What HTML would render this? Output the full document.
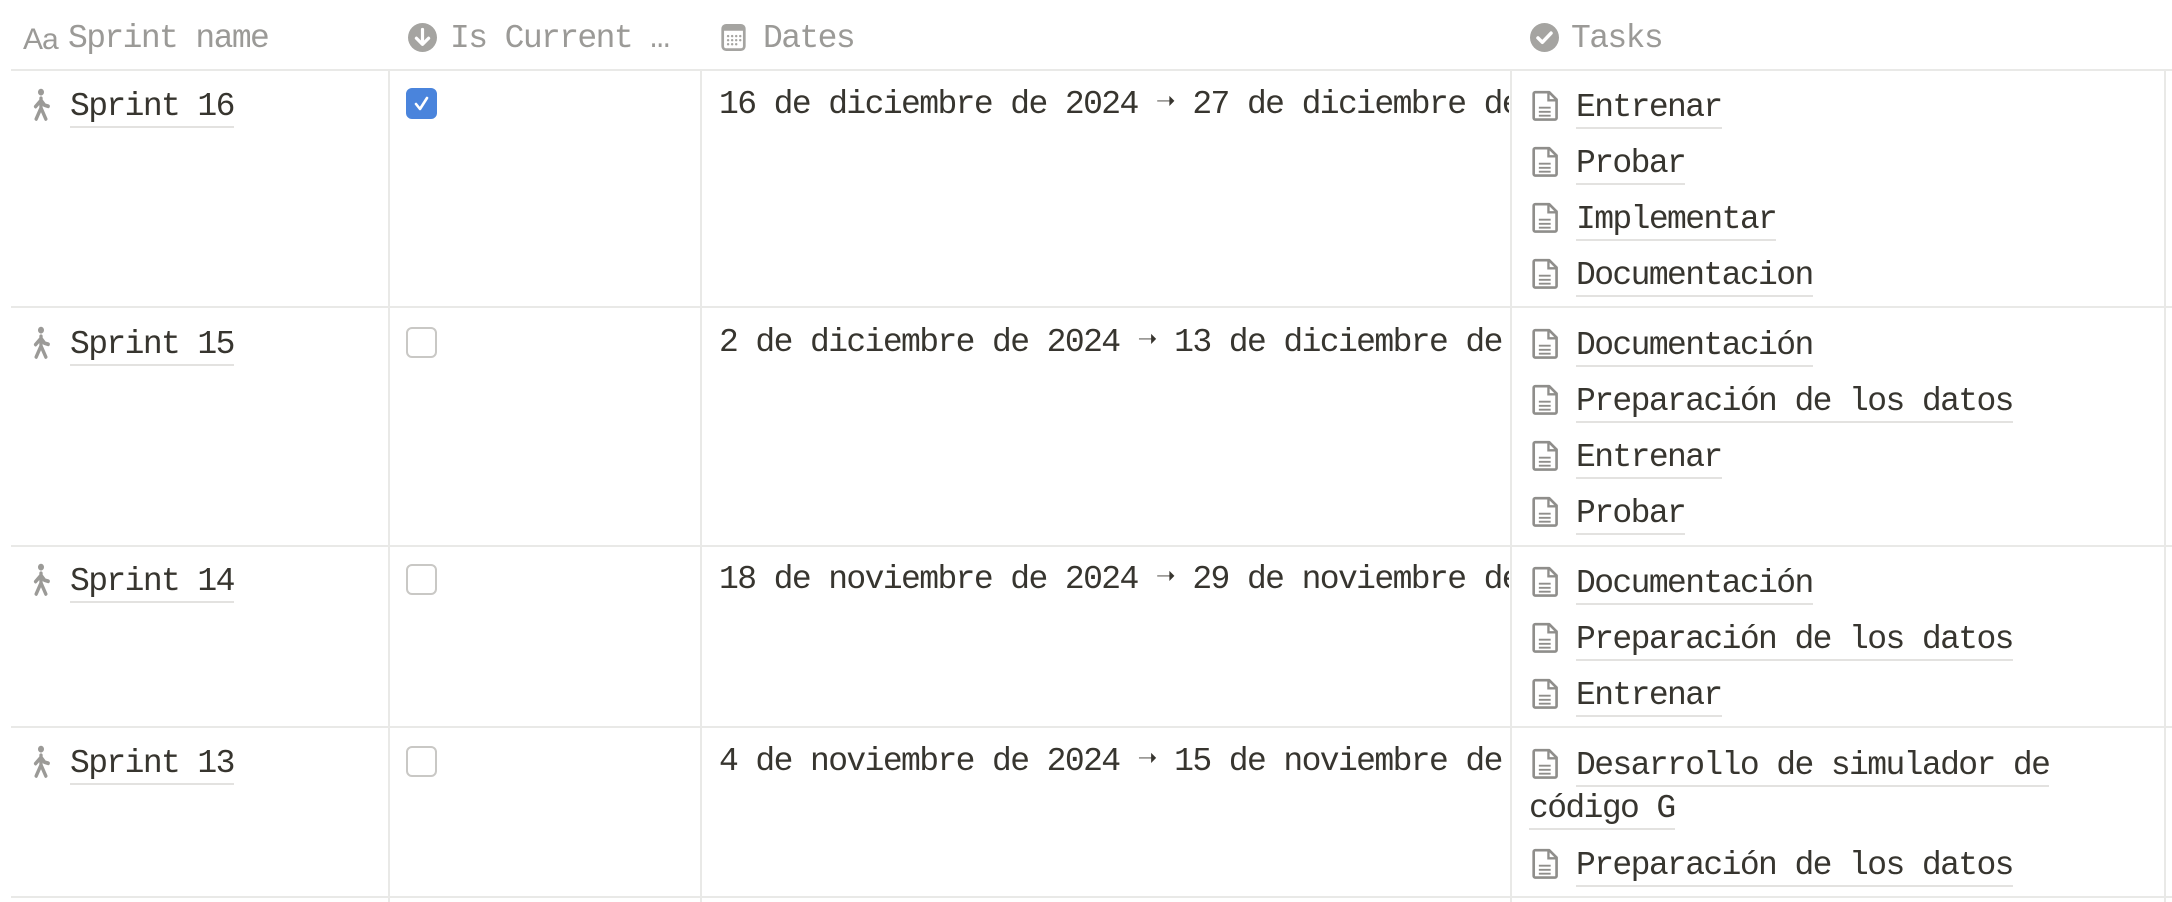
<!DOCTYPE html>
<html><head><meta charset="utf-8"><style>
body{margin:0;width:2172px;height:902px;background:#fff;position:relative;overflow:hidden;font-family:"Liberation Mono",monospace;color:#37352f}
.t{position:absolute;font-size:33px;line-height:40px;white-space:nowrap;letter-spacing:-1.6px;margin-top:3px}
.h{color:#9b9a97}
.u{border-bottom:2px solid #e3e2e0;padding-bottom:1px}
.hl{position:absolute;height:2px;background:#e9e9e7;left:11px;width:2161px}
.vl{position:absolute;width:2px;background:#e9e9e7;top:69px;height:833px}
.ic{position:absolute}
.cb{position:absolute;left:406px;width:31px;height:31px;border:2px solid #c9c8c5;border-radius:6px;box-sizing:border-box}
.dates{position:absolute;left:719px;width:790px;overflow:hidden}
</style></head><body>
<div class="hl" style="top:69px"></div>
<div class="hl" style="top:306px"></div>
<div class="hl" style="top:545px"></div>
<div class="hl" style="top:726px"></div>
<div class="hl" style="top:896px"></div>
<div class="vl" style="left:388px"></div>
<div class="vl" style="left:700px"></div>
<div class="vl" style="left:1510px"></div>
<div class="vl" style="left:2164px"></div>

<div class="t h" style="left:23px;top:17px;font-family:'Liberation Sans',sans-serif;font-size:30px;letter-spacing:-1px">Aa</div>
<div class="t h" style="left:68px;top:16px">Sprint name</div>
<svg class="ic" style="left:408px;top:23px" width="29" height="29" viewBox="0 0 20 20"><circle cx="10" cy="10" r="10" fill="#a5a4a1"/><path d="M10 4.5v10M5.8 10.5L10 14.7l4.2-4.2" stroke="#fff" stroke-width="2.2" fill="none" stroke-linecap="round" stroke-linejoin="round"/></svg>
<div class="t h" style="left:450px;top:16px">Is Current …</div>
<svg class="ic" style="left:721px;top:24px" width="25" height="27" viewBox="0 0 18 20"><rect x="1" y="1" width="16" height="18" rx="2.5" fill="none" stroke="#a5a4a1" stroke-width="2"/><rect x="1" y="1" width="16" height="4" fill="#a5a4a1"/><g fill="#a5a4a1"><circle cx="5" cy="9" r=".9"/><circle cx="8" cy="9" r=".9"/><circle cx="11" cy="9" r=".9"/><circle cx="14" cy="9" r=".9"/><circle cx="5" cy="12" r=".9"/><circle cx="8" cy="12" r=".9"/><circle cx="11" cy="12" r=".9"/><circle cx="14" cy="12" r=".9"/><circle cx="5" cy="15" r=".9"/><circle cx="8" cy="15" r=".9"/><circle cx="11" cy="15" r=".9"/></g></svg>
<div class="t h" style="left:763px;top:16px">Dates</div>
<svg class="ic" style="left:1530px;top:23px" width="29" height="29" viewBox="0 0 20 20"><circle cx="10" cy="10" r="10" fill="#a5a4a1"/><path d="M5.5 10.3l3 3 6-6.3" stroke="#fff" stroke-width="2.4" fill="none" stroke-linecap="round" stroke-linejoin="round"/></svg>
<div class="t h" style="left:1571px;top:16px">Tasks</div>

<svg width="0" height="0" style="position:absolute"><defs>
<g id="w"><circle cx="10" cy="3" r="2.5" fill="#9b9a97"/><path d="M10 7.5v7M10 14.5l-4 8M10 14.5l4 8M10 9l-4.5 4.5M10 9l3 3.5 3 .8" stroke="#9b9a97" stroke-width="2.8" fill="none" stroke-linecap="round" stroke-linejoin="round"/></g>
<g id="d"><path d="M2 1.5h9.5l5 5V19a1 1 0 0 1-1 1H2a1 1 0 0 1-1-1V2.5a1 1 0 0 1 1-1z" fill="none" stroke="#8f8e8b" stroke-width="1.8" stroke-linejoin="round"/><path d="M11 1.5v5.5h5.5" fill="none" stroke="#8f8e8b" stroke-width="1.6"/><path d="M4.5 12h8M4.5 14.8h8M4.5 17.4h8" stroke="#8f8e8b" stroke-width="1.3"/></g>
</defs></svg>

<svg class="ic" style="left:29px;top:88px" width="24" height="33" viewBox="0 0 20 24" preserveAspectRatio="none"><use href="#w"/></svg>
<div class="t" style="left:70px;top:84px"><span class="u">Sprint 16</span></div>
<div class="cb" style="top:88px;background:#4a84dc;border-color:#4a84dc"><svg width="27" height="27" viewBox="0 0 27 27" style="position:absolute;left:0;top:0"><path d="M8 14l4 5 7-11" stroke="#fff" stroke-width="2.6" fill="none" stroke-linecap="round" stroke-linejoin="round"/></svg></div>
<div class="t dates" style="top:82px">16 de diciembre de 2024 ➝ 27 de diciembre de 2024</div>

<svg class="ic" style="left:29px;top:326px" width="24" height="33" viewBox="0 0 20 24" preserveAspectRatio="none"><use href="#w"/></svg>
<div class="t" style="left:70px;top:322px"><span class="u">Sprint 15</span></div>
<div class="cb" style="top:327px"></div>
<div class="t dates" style="top:320px">2 de diciembre de 2024 ➝ 13 de diciembre de 2024</div>

<svg class="ic" style="left:29px;top:563px" width="24" height="33" viewBox="0 0 20 24" preserveAspectRatio="none"><use href="#w"/></svg>
<div class="t" style="left:70px;top:559px"><span class="u">Sprint 14</span></div>
<div class="cb" style="top:564px"></div>
<div class="t dates" style="top:557px">18 de noviembre de 2024 ➝ 29 de noviembre de 2024</div>

<svg class="ic" style="left:29px;top:745px" width="24" height="33" viewBox="0 0 20 24" preserveAspectRatio="none"><use href="#w"/></svg>
<div class="t" style="left:70px;top:741px"><span class="u">Sprint 13</span></div>
<div class="cb" style="top:746px"></div>
<div class="t dates" style="top:739px">4 de noviembre de 2024 ➝ 15 de noviembre de 2024</div>

<svg class="ic" style="left:1532px;top:90px" width="27" height="31" viewBox="0 0 18 21"><use href="#d"/></svg>
<div class="t" style="left:1576px;top:85px"><span class="u">Entrenar</span></div>
<svg class="ic" style="left:1532px;top:146px" width="27" height="31" viewBox="0 0 18 21"><use href="#d"/></svg>
<div class="t" style="left:1576px;top:141px"><span class="u">Probar</span></div>
<svg class="ic" style="left:1532px;top:202px" width="27" height="31" viewBox="0 0 18 21"><use href="#d"/></svg>
<div class="t" style="left:1576px;top:197px"><span class="u">Implementar</span></div>
<svg class="ic" style="left:1532px;top:258px" width="27" height="31" viewBox="0 0 18 21"><use href="#d"/></svg>
<div class="t" style="left:1576px;top:253px"><span class="u">Documentacion</span></div>

<svg class="ic" style="left:1532px;top:328px" width="27" height="31" viewBox="0 0 18 21"><use href="#d"/></svg>
<div class="t" style="left:1576px;top:323px"><span class="u">Documentación</span></div>
<svg class="ic" style="left:1532px;top:384px" width="27" height="31" viewBox="0 0 18 21"><use href="#d"/></svg>
<div class="t" style="left:1576px;top:379px"><span class="u">Preparación de los datos</span></div>
<svg class="ic" style="left:1532px;top:440px" width="27" height="31" viewBox="0 0 18 21"><use href="#d"/></svg>
<div class="t" style="left:1576px;top:435px"><span class="u">Entrenar</span></div>
<svg class="ic" style="left:1532px;top:496px" width="27" height="31" viewBox="0 0 18 21"><use href="#d"/></svg>
<div class="t" style="left:1576px;top:491px"><span class="u">Probar</span></div>

<svg class="ic" style="left:1532px;top:566px" width="27" height="31" viewBox="0 0 18 21"><use href="#d"/></svg>
<div class="t" style="left:1576px;top:561px"><span class="u">Documentación</span></div>
<svg class="ic" style="left:1532px;top:622px" width="27" height="31" viewBox="0 0 18 21"><use href="#d"/></svg>
<div class="t" style="left:1576px;top:617px"><span class="u">Preparación de los datos</span></div>
<svg class="ic" style="left:1532px;top:678px" width="27" height="31" viewBox="0 0 18 21"><use href="#d"/></svg>
<div class="t" style="left:1576px;top:673px"><span class="u">Entrenar</span></div>

<svg class="ic" style="left:1532px;top:748px" width="27" height="31" viewBox="0 0 18 21"><use href="#d"/></svg>
<div class="t" style="left:1576px;top:743px"><span class="u">Desarrollo de simulador de </span></div>
<div class="t" style="left:1529px;top:786px"><span class="u">código G</span></div>
<svg class="ic" style="left:1532px;top:848px" width="27" height="31" viewBox="0 0 18 21"><use href="#d"/></svg>
<div class="t" style="left:1576px;top:843px"><span class="u">Preparación de los datos</span></div>
</body></html>
